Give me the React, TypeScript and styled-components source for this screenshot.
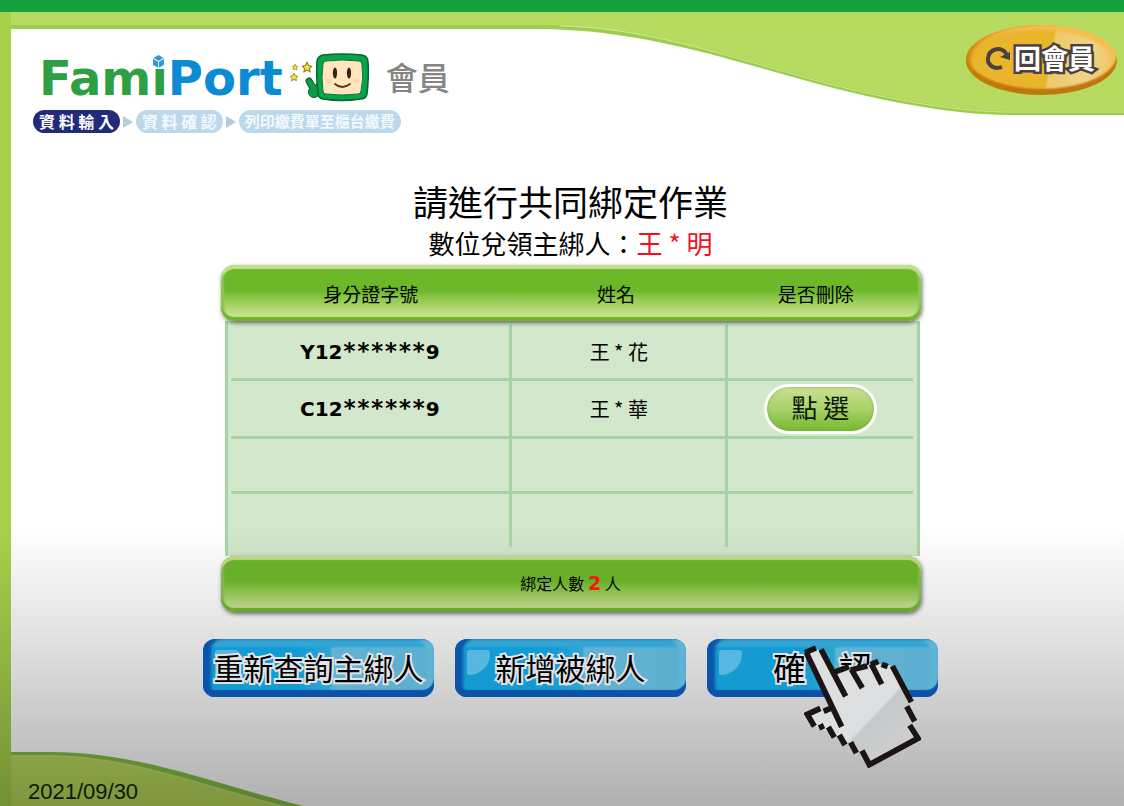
import React from "react";
import styled, { createGlobalStyle } from "styled-components";

const GlobalStyle = createGlobalStyle`
  *, *::before, *::after { box-sizing: border-box; }
  body {
    margin: 0;
    background: #fff;
    color: #000;
    font-family: "Noto Sans CJK TC", sans-serif;
  }
`;

const Page = styled.div`
  position: relative;
  display: flex;
  flex-direction: column;
  min-height: 100vh;
  overflow: hidden;
  border-top: 12px solid #17a03c;
  background: linear-gradient(90deg, #a7d14b 11px, #fff 11px);
`;

const Wave = styled.svg`
  position: absolute;
  top: 0;
  left: 0;
  width: 100%;
  height: 104px;
`;

const Hill = styled.svg`
  position: absolute;
  bottom: 0;
  left: 11px;
  width: 292px;
  height: 54px;
`;

const Shade = styled.div`
  position: absolute;
  inset: auto 0 0 0;
  height: 280px;
  pointer-events: none;
  background: linear-gradient(rgba(0, 0, 0, 0), rgba(0, 0, 0, 0.1) 35%, rgba(0, 0, 0, 0.31));
`;

const Header = styled.header`
  position: relative;
  display: flex;
  justify-content: space-between;
  align-items: flex-start;
  padding: 13px 7px 0 33px;
`;

const BrandArea = styled.div`
  display: flex;
  flex-direction: column;
  gap: 8px;
  padding-top: 28px;
`;

const Brand = styled.div`
  display: flex;
  align-items: center;
  height: 49px;
  padding-left: 6px;
`;

const Wordmark = styled.span`
  position: relative;
  font: bold 48px/48px "DejaVu Sans", sans-serif;
  color: #2da044;
`;

const WordmarkBlue = styled.span`
  color: #0b8bd3;
`;

const Cube = styled.svg`
  position: absolute;
  left: 113px;
  top: 1px;
  width: 13px;
  height: 13px;
`;

const Mascot = styled.svg`
  width: 80px;
  height: 49px;
  margin-left: 6px;
`;

const Section = styled.span`
  margin-left: 17px;
  font-size: 32px;
  line-height: 44px;
  padding-bottom: 4px;
  font-weight: 500;
  color: #858585;
`;

const Steps = styled.ol`
  display: flex;
  align-items: center;
  gap: 3px;
  margin: 0;
  padding: 0;
  list-style: none;
`;

const Step = styled.li<{ $active?: boolean; $size: number }>`
  height: 23px;
  padding: 0 6px;
  border-radius: 12px;
  font-size: ${(p) => p.$size}px;
  line-height: 22px;
  font-weight: 700;
  white-space: nowrap;
  color: ${(p) => (p.$active ? "#fff" : "#f2f9ff")};
  background: ${(p) => (p.$active ? "#212b7a" : "#bdd8ea")};
`;

const StepArrow = styled.li`
  border-left: 10px solid #b3cddf;
  border-top: 6px solid transparent;
  border-bottom: 6px solid transparent;
`;

const BackButton = styled.button`
  display: flex;
  align-items: center;
  justify-content: center;
  gap: 3px;
  width: 151px;
  height: 70px;
  padding: 0 3px 4px 0;
  border: 0;
  border-radius: 50%;
  cursor: pointer;
  font: 700 27px/34px "Noto Sans CJK TC", sans-serif;
  color: #fff;
  -webkit-text-stroke: 5px #4a4142;
  paint-order: stroke fill;
  background: linear-gradient(100deg, #e9b52c 55%, #eec969 56%, #f1d48a 80%, #eec050);
  box-shadow: inset 6px 0 4px -2px #c98208, inset 0 -6px 2px #bf770c, inset -5px 4px 3px #f5c154,
    inset 0 5px 2px #f1b738;
`;

const Main = styled.main`
  position: relative;
  display: flex;
  flex-direction: column;
  align-items: center;
  padding: 47px 0 0 17px;
`;

const Title = styled.h1`
  margin: 0;
  font-size: 35px;
  line-height: 42px;
  font-weight: 400;
`;

const Subtitle = styled.p`
  margin: 0 0 2px;
  font-size: 26px;
  line-height: 41px;
  font-weight: 400;
`;

const Highlight = styled.span`
  color: #f40d1c;
`;

const Table = styled.table`
  display: block;
  width: 100%;
  max-width: 700px;
  font-size: 20px;
`;

const Row = styled.tr<{ $height: number }>`
  display: grid;
  grid-template-columns: 280fr 217fr 188fr;
  height: ${(p) => p.$height}px;
`;

const barStyle = `
  position: relative;
  display: block;
  height: 56px;
  padding: 0 12px 0 12px;
  border-radius: 14px;
`;

const Head = styled.thead`
  ${barStyle}
  background: linear-gradient(#6cb828 45%, #92ca4e 62%, #c9e28e 90%);
  box-shadow: inset 0 4px 1px #c5df88, inset 0 -4px 1px #6fb52c, inset 3px 0 2px #8cc850,
    inset -3px 0 2px #8cc850, 1px 2px 4px rgba(60, 60, 60, 0.75);
`;

const Foot = styled.tfoot`
  ${barStyle}
  background: linear-gradient(#67b027 45%, #8abd4c 62%, #b8d184 90%);
  box-shadow: inset 0 4px 1px #bcd683, inset 0 -4px 1px #68a632, inset 3px 0 2px #80b94c,
    inset -3px 0 2px #80b94c, 1px 2px 4px rgba(60, 60, 60, 0.75);
`;

const HeadCell = styled.th`
  align-self: center;
  font-size: 19px;
  line-height: 30px;
  font-weight: 400;
  text-align: center;
`;

const Body = styled.tbody`
  display: block;
  margin: 0 1px 0 4px;
  padding: 4px 4px 9px 3px;
  border: solid #a5d3a3;
  border-width: 0 3px;
  background: linear-gradient(#d3e7cc 85%, #cbdfc5);

  tr + tr {
    border-top: 3px solid #a5d3a3;
  }
`;

const Cell = styled.td`
  display: flex;
  align-items: center;
  justify-content: center;
  padding: 0;

  & + & {
    border-left: 3px solid #a5d3a3;
  }
`;

const IdNumber = styled.span`
  font: bold 20px/28px "DejaVu Sans", sans-serif;
`;

const Mask = styled.span`
  font: bold 23px/28px "DejaVu Sans Mono", monospace;
`;

const FootRow = styled.tr`
  display: flex;
  align-items: center;
  justify-content: center;
  height: 54px;
`;

const FootCell = styled.td`
  font-size: 16px;
  line-height: 28px;
`;

const Count = styled.strong`
  font: bold 19px/28px "DejaVu Sans", sans-serif;
  color: #f11a0c;
`;

const PickButton = styled.button`
  width: 113px;
  height: 50px;
  padding: 0 0 4px;
  border: 3px solid #fff;
  border-radius: 25px;
  cursor: pointer;
  font: 400 26px/36px "Noto Sans CJK TC", sans-serif;
  color: #0c1606;
  background: linear-gradient(#cbe196, #a9d168 50%, #76b92d);
  box-shadow: inset 0 0 3px #7aa84a;
`;

const Actions = styled.div`
  display: flex;
  flex-wrap: wrap;
  justify-content: center;
  gap: 21px;
  margin-top: 27px;
`;

const ActionSlot = styled.div`
  position: relative;
`;

const ActionButton = styled.button<{ $size?: number }>`
  display: flex;
  align-items: center;
  justify-content: center;
  position: relative;
  width: 231px;
  height: 58px;
  padding: 0 0 2px;
  border: 0;
  border-radius: 12px;
  cursor: pointer;
  font: 400 ${(p) => p.$size ?? 30}px/40px "Noto Sans CJK TC", sans-serif;
  white-space: pre;
  color: #000;
  -webkit-text-stroke: 4px #dfe3e8;
  paint-order: stroke fill;
  background: linear-gradient(90deg, #149bd2 40%, #2ca6d4 55%, #62b3d3 56%, #5bafd0);
  box-shadow: inset 0 -7px 1px #0c52a8, inset 8px 0 3px #0b56ab, inset -8px 0 3px #5fb4d6,
    inset 0 8px 2px #30a5d6;
`;

const Gleam = styled.span`
  position: absolute;
  left: 12px;
  top: 11px;
  width: 23px;
  height: 25px;
  border-radius: 3px 3px 24px 2px;
  background: rgba(190, 225, 245, 0.4);
`;

const Label = styled.span`
  position: relative;
`;

const Hand = styled.svg`
  position: absolute;
  left: 97px;
  top: 6px;
  width: 117px;
  height: 123px;
  pointer-events: none;
`;

const DateBar = styled.footer`
  position: relative;
  margin-top: auto;
  padding: 0 28px 1px;
  font: 22px/26px "Liberation Sans", sans-serif;
  color: #101808;
`;

const people = [
  { first: "Y12", last: "9", name: "王 * 花", removable: false },
  { first: "C12", last: "9", name: "王 * 華", removable: true },
  null,
  null,
];

const rowHeights = [53, 58, 55, 56];

const STAR = "M0-6L2-2L6-1L3 2L4 6L0 4L-4 6L-3 2L-6-1L-2-2Z";

function MascotArt() {
  return (
    <Mascot viewBox="0 0 80 49" aria-hidden="true">
      <g fill="#f7e936" stroke="#8b7b22" strokeWidth="1.4">
        <path d={STAR} transform="translate(6 14) scale(.48)" />
        <path d={STAR} transform="translate(18 14) scale(.78)" />
        <path d={STAR} transform="translate(5 24) scale(.62)" />
      </g>
      <path d="M20 28L24 35M25 38L30 33" stroke="#075b2d" strokeWidth="7" strokeLinecap="round" />
      <circle cx="25" cy="39" r="5.5" fill="#0a9c48" stroke="#075b2d" />
      <path d="M20 28L25 36L30 34" fill="none" stroke="#0a9c48" strokeWidth="5" strokeLinecap="round" />
      <path
        d="M34 2Q53 0 73 2Q79 3 79 9Q80 24 78 41Q77 46 71 46Q53 49 34 46Q29 45 29 40Q27 25 28 8Q29 3 34 2Z"
        fill="#08a34b"
        stroke="#07652f"
        strokeWidth="1.5"
      />
      <path
        d="M37 8Q53 6 70 8Q73 8 73 12Q75 25 72 38Q72 41 69 41Q53 43 37 41Q34 41 34 38Q32 25 34 11Q34 8 37 8Z"
        fill="#ffe6bd"
        stroke="#067b38"
      />
      <ellipse cx="46" cy="20" rx="2.1" ry="5.5" fill="#3a2112" />
      <ellipse cx="60" cy="20" rx="2.1" ry="5.5" fill="#3a2112" />
      <path d="M46 31Q53 37 61 31" fill="none" stroke="#5a3216" strokeWidth="1.8" strokeLinecap="round" />
      <circle cx="40" cy="28" r="2.5" fill="#f8d9b0" />
      <circle cx="67" cy="28" r="2.5" fill="#f8d9b0" />
    </Mascot>
  );
}

function HandPointer() {
  return (
    <Hand viewBox="340 75 351 369" aria-hidden="true">
      <defs>
        <linearGradient id="hand" x1="0" y1="0" x2="1" y2="1">
          <stop offset=".58" stopColor="#dedfe1" />
          <stop offset=".6" stopColor="#c6c9ca" />
          <stop offset="1" stopColor="#d0d1d1" />
        </linearGradient>
      </defs>
      <path
        d="M348 98L378 86L392 95L430 158L470 142L490 150L530 135L550 130L605 138L662 245L672 303L683 356L537 435L510 395L447 350L371 318L350 283L388 265L422 268Z"
        fill="url(#hand)"
      />
      <path
        d="M343 98L376 84M347 98L453 320M391 88L465 229M430 157L475 140M482 148L515 204M480 150L530 138M542 132L573 193M540 134L563 124M573 133L591 140M605 138L662 246M648 259L672 304M657 316L682 355L536 434L514 392M497 399L480 367M463 375L446 345M431 352L413 321M385 324L400 317M371 319L350 283L389 265M399 274L426 262"
        fill="none"
        stroke="#1b1413"
        strokeWidth="17"
      />
    </Hand>
  );
}

export default function App() {
  return (
    <>
      <GlobalStyle />
      <Page>
        <Wave viewBox="0 0 1124 104" preserveAspectRatio="none" aria-hidden="true">
          <path d="M11 0H1124V103H1010C950 103 870 87 800 67C720 45 640 18 540 17H11Z" fill="#9ccd50" />
          <path d="M11 0H1124V99H1010C950 99 870 83 800 63C720 41 640 14 540 13H11Z" fill="#b7da60" />
          <path d="M1124 100H1010C950 100 870 84 800 64C720 42 640 15 560 14" fill="none" stroke="#cfe98f" />
        </Wave>
        <Hill viewBox="0 0 292 54" aria-hidden="true">
          <path d="M0 0H40C130 1 190 28 292 54H0Z" fill="#82bf44" />
          <path d="M0 3H40C125 5 185 32 275 54H0Z" fill="#bcdc70" />
          <path d="M0 5H40C125 7 185 34 267 54H0Z" fill="#b9d85c" />
        </Hill>
        <Shade />

        <Header>
          <BrandArea>
            <Brand>
              <Wordmark>
                Fami<WordmarkBlue>Port</WordmarkBlue>
                <Cube viewBox="0 0 12 12" aria-hidden="true">
                  <rect width="12" height="12" fill="#fff" />
                  <path d="M6 0L11 3V9L6 12L1 9V3Z" fill="#2b97d6" />
                  <path d="M1 3L6 6L11 3M6 6V12" stroke="#d8effc" fill="none" />
                </Cube>
              </Wordmark>
              <MascotArt />
              <Section>會員</Section>
            </Brand>
            <Steps>
              <Step $active $size={16}>資 料 輸 入</Step>
              <StepArrow aria-hidden="true" />
              <Step $size={16}>資 料 確 認</Step>
              <StepArrow aria-hidden="true" />
              <Step $size={15}>列印繳費單至櫃台繳費</Step>
            </Steps>
          </BrandArea>
          <BackButton type="button">
            <svg width="26" height="26" viewBox="0 0 26 26" aria-hidden="true">
              <path d="M17 22C9 25 2 20 3 13C4 5 14 1 20 7L22 10" fill="none" stroke="#4a4142" strokeWidth="4" />
              <path d="M15 12L25 7V15Z" fill="#4a4142" />
            </svg>
            回會員
          </BackButton>
        </Header>

        <Main>
          <Title>請進行共同綁定作業</Title>
          <Subtitle>
            數位兌領主綁人：<Highlight>王 * 明</Highlight>
          </Subtitle>
          <Table>
            <Head>
              <Row $height={58}>
                <HeadCell scope="col">身分證字號</HeadCell>
                <HeadCell scope="col">姓名</HeadCell>
                <HeadCell scope="col">是否刪除</HeadCell>
              </Row>
            </Head>
            <Body>
              {people.map((p, i) => (
                <Row key={i} $height={rowHeights[i]}>
                  <Cell>
                    {p && (
                      <IdNumber>
                        {p.first}
                        <Mask>******</Mask>
                        {p.last}
                      </IdNumber>
                    )}
                  </Cell>
                  <Cell>{p?.name}</Cell>
                  <Cell>{p?.removable && <PickButton type="button">點 選</PickButton>}</Cell>
                </Row>
              ))}
            </Body>
            <Foot>
              <FootRow>
                <FootCell colSpan={3}>
                  綁定人數 <Count>2</Count> 人
                </FootCell>
              </FootRow>
            </Foot>
          </Table>
          <Actions>
            <ActionButton type="button">
              <Gleam />
              <Label>重新查詢主綁人</Label>
            </ActionButton>
            <ActionButton type="button">
              <Gleam />
              <Label>新增被綁人</Label>
            </ActionButton>
            <ActionSlot>
              <ActionButton type="button" $size={33}>
                <Gleam />
                <Label>確　認</Label>
              </ActionButton>
              <HandPointer />
            </ActionSlot>
          </Actions>
        </Main>

        <DateBar>
          <time dateTime="2021-09-30">2021/09/30</time>
        </DateBar>
      </Page>
    </>
  );
}
